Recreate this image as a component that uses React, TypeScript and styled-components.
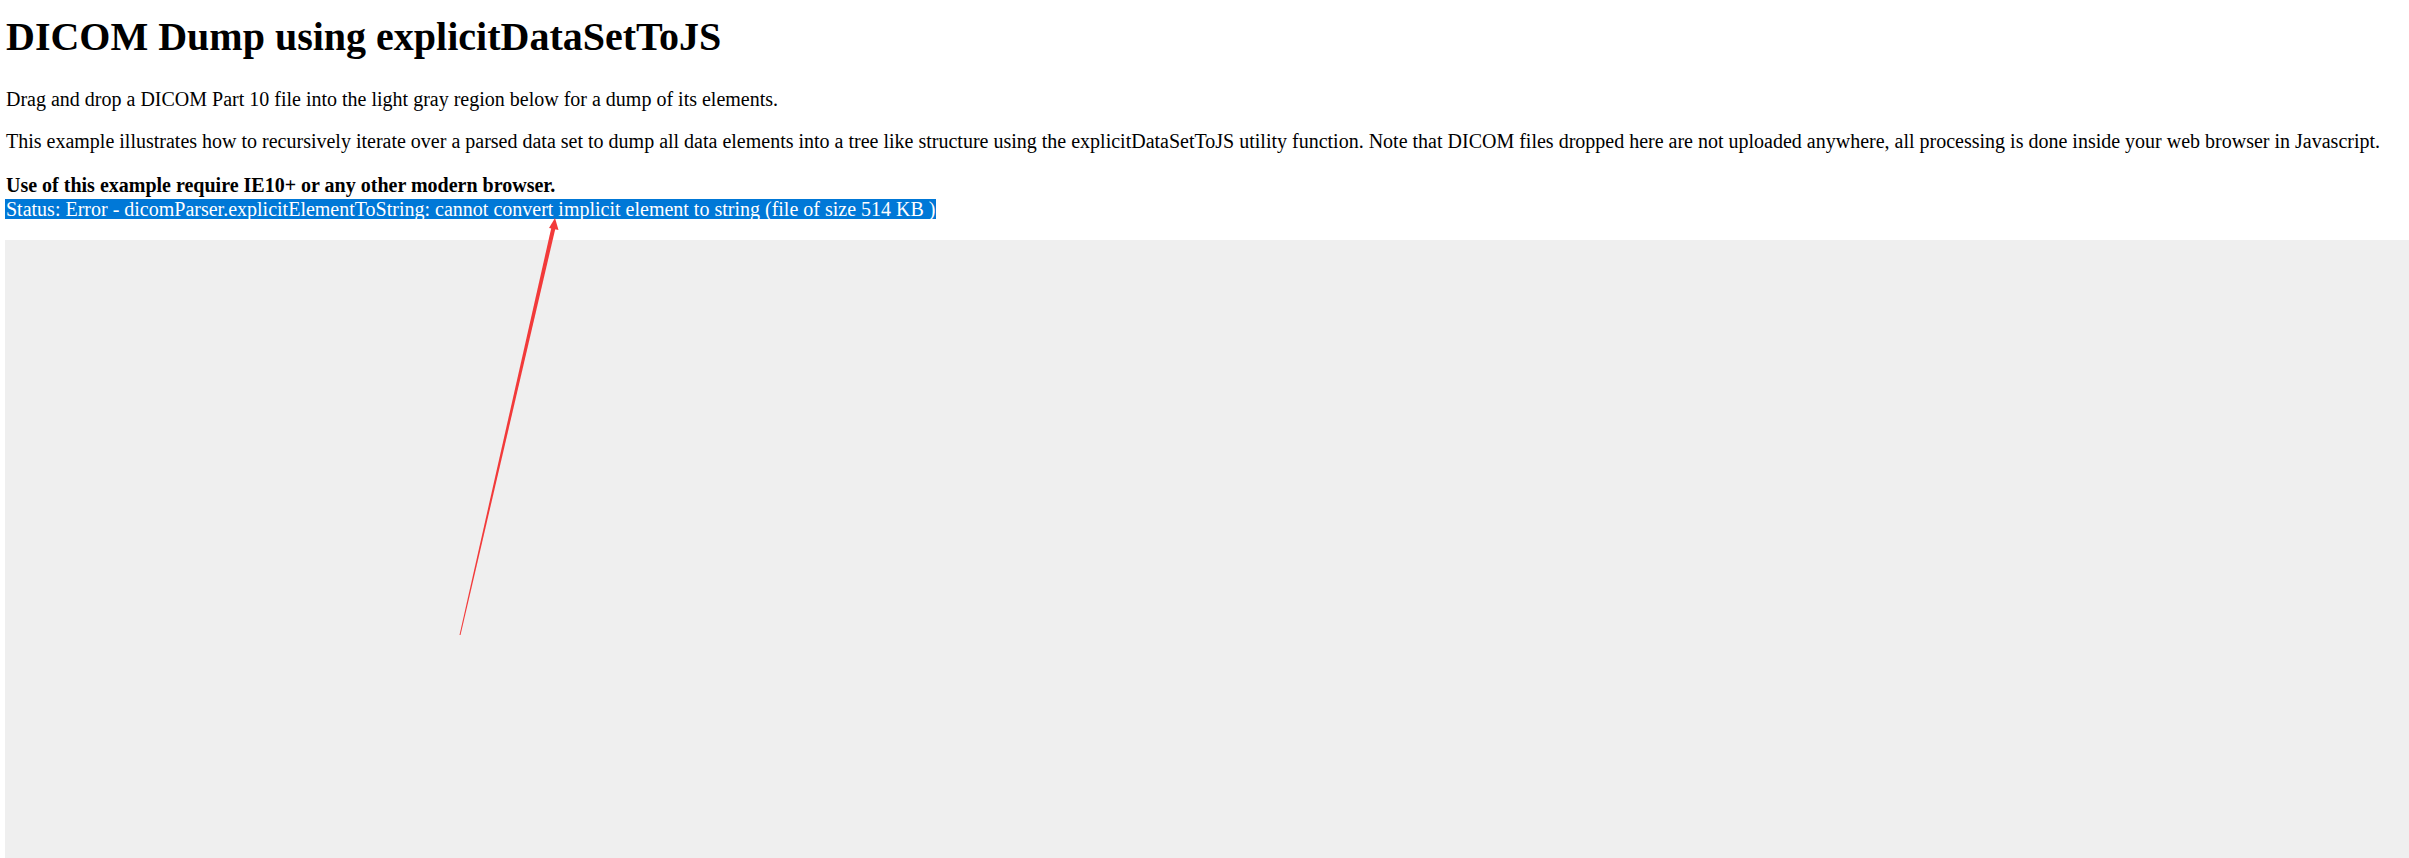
import React from "react";
import styled, { createGlobalStyle } from "styled-components";

const Global = createGlobalStyle`
  html, body { margin: 0; padding: 0; background: #ffffff; }
  body {
    font-family: "Liberation Serif", "Times New Roman", serif;
    font-size: 20px;
    color: #000000;
  }
`;

const Page = styled.div`
  position: relative;
  padding: 14px 0 0 5px;
`;

const Title = styled.h1`
  margin: 0 0 0 1px;
  font-size: 40px;
  line-height: 46px;
  font-weight: bold;
`;

const Para = styled.p<{ $top: number }>`
  margin: ${(p) => p.$top}px 0 0 1px;
  line-height: 23px;
`;

const Notice = styled.div`
  margin: 21px 0 0 1px;
  line-height: 23px;
  font-weight: bold;
`;

const StatusRow = styled.div`
  line-height: 23px;
  height: 23px;
  display: flex;
  align-items: center;
`;

const Selected = styled.span`
  display: inline-block;
  background: #0078d7;
  color: #ffffff;
  line-height: 20px;
  height: 20px;
  padding-left: 1px;
`;

const DropZone = styled.div`
  margin-top: 20px;
  height: 618px;
  background: #efefef;
`;

const Annotation = styled.svg`
  position: absolute;
  left: 0;
  top: 0;
  pointer-events: none;
  overflow: visible;
`;

export default function App() {
  return (
    <>
      <Global />
      <Page>
        <Title>DICOM Dump using explicitDataSetToJS</Title>
        <Para $top={28}>
          Drag and drop a DICOM Part 10 file into the light gray region below for a dump of its elements.
        </Para>
        <Para $top={19}>
          This example illustrates how to recursively iterate over a parsed data set to dump all data elements into a
          tree like structure using the explicitDataSetToJS utility function. Note that DICOM files dropped here are not
          uploaded anywhere, all processing is done inside your web browser in Javascript.
        </Para>
        <Notice>Use of this example require IE10+ or any other modern browser.</Notice>
        <StatusRow>
          <Selected>
            Status: Error - dicomParser.explicitElementToString: cannot convert implicit element to string (file of size
            514 KB )
          </Selected>
        </StatusRow>
        <DropZone />
        <Annotation width="2409" height="858" viewBox="0 0 2409 858">
          <polygon points="459.5,635 460.5,635 555.5,228 551.5,227" fill="#f23a3a" />
          <polygon points="555,218 558.5,230 549,228" fill="#f23a3a" />
        </Annotation>
      </Page>
    </>
  );
}
